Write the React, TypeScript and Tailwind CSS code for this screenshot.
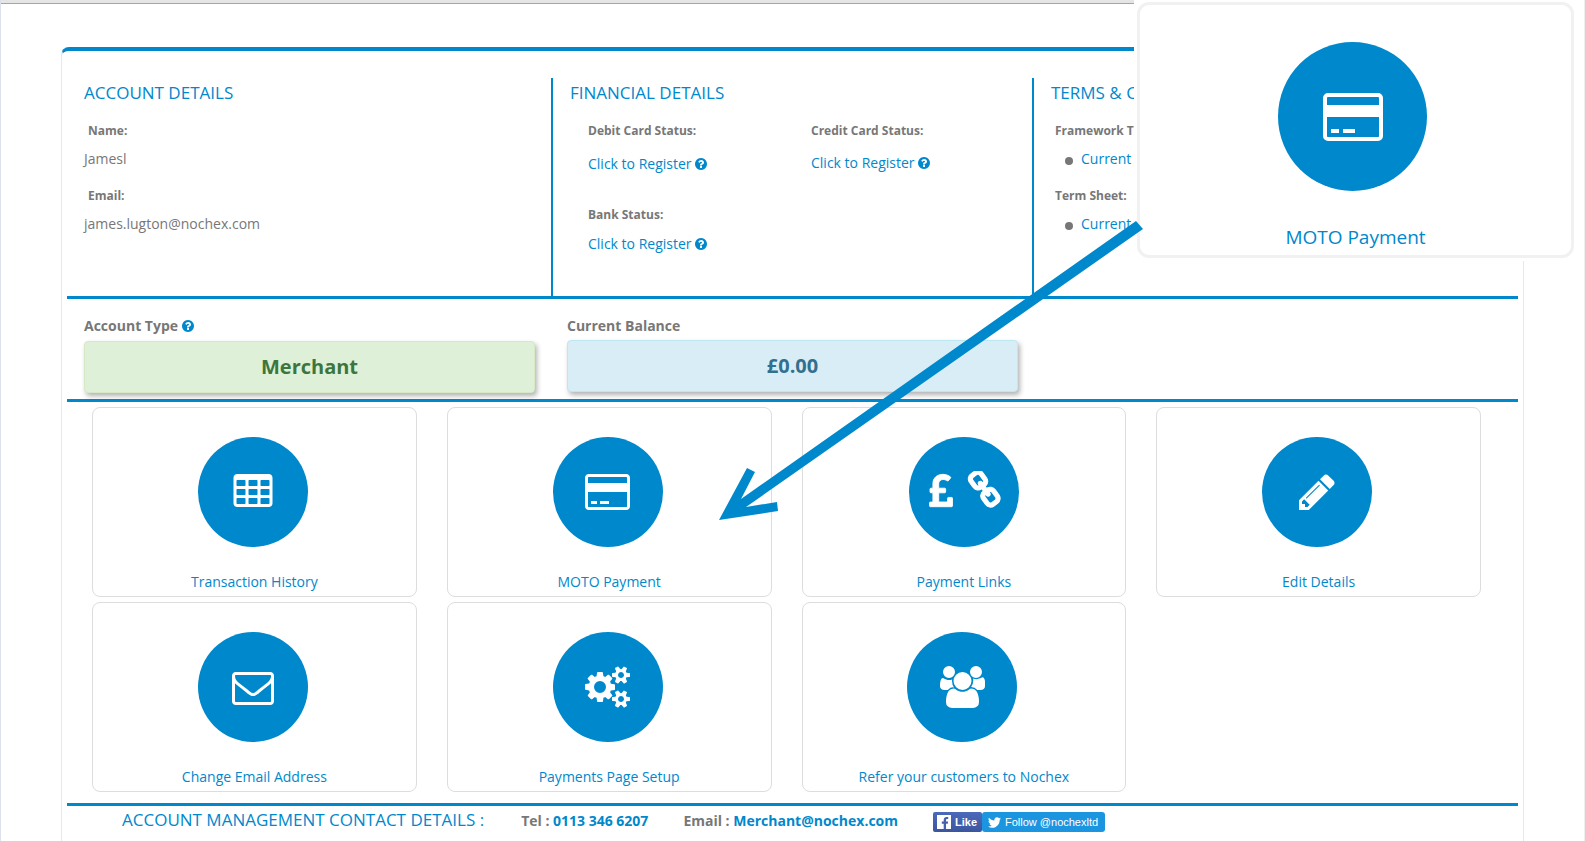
import type { ReactNode } from "react";
import { FaPoundSign, FaFacebookF, FaTwitter } from "react-icons/fa";

type GlyphProps = { d: string; box?: string; className: string };

function Glyph({ d, box = "0 0 1792 1792", className }: GlyphProps) {
  return (
    <svg viewBox={box} className={className} fill="currentColor" aria-hidden="true">
      <path d={d} />
    </svg>
  );
}

const CELL = "v-192q0-14-9-23t-23-9h-320q-14 0-23 9t-9 23v192q0 14 9 23t23 9h320q14 0 23-9t9-23z";
const TABLE =
  "M576 1376" + CELL + "m0-384" + CELL + "m512 384" + CELL + "m-512-768" + CELL + "m512 384" + CELL +
  "m512 384" + CELL + "m-512-768" + CELL + "m512 384" + CELL + "m0-384" + CELL +
  "m128-320v1088q0 66-47 113t-113 47h-1344q-66 0-113-47t-47-113v-1088q0-66 47-113t113-47h1344q66 0 113 47t47 113z";
const CARD =
  "M1760 128q66 0 113 47t47 113v1216q0 66-47 113t-113 47h-1600q-66 0-113-47t-47-113v-1216q0-66 47-113t113-47h1600zm-1600 128q-13 0-22.5 9.5t-9.5 22.5v224h1664v-224q0-13-9.5-22.5t-22.5-9.5h-1600zm1600 1280q13 0 22.5-9.5t9.5-22.5v-608h-1664v608q0 13 9.5 22.5t22.5 9.5h1600zm-1504-128v-128h256v128h-256zm384 0v-128h384v128h-384z";
const LINK =
  "M1520 1216q0-40-28-68l-208-208q-28-28-68-28-42 0-72 32 3 3 19 18.5t21.5 21.5 15 19 13 25.5 3.5 27.5q0 40-28 68t-68 28q-15 0-27.5-3.5t-25.5-13-19-15-21.5-21.5-18.5-19q-33 31-33 73 0 40 28 68l206 207q27 27 68 27 40 0 68-26l147-146q28-28 28-67zm-703-705q0-40-28-68l-206-207q-28-28-68-28-39 0-68 27l-147 146q-28 28-28 67 0 40 28 68l208 208q27 27 68 27 42 0 72-31-3-3-19-18.5t-21.5-21.5-15-19-13-25.5-3.5-27.5q0-40 28-68t68-28q15 0 27.5 3.5t25.5 13 19 15 21.5 21.5 18.5 19q33-31 33-73zm895 705q0 120-85 203l-147 146q-83 83-203 83-121 0-204-85l-206-207q-83-83-83-203 0-123 88-209l-88-88q-86 88-208 88-120 0-204-84l-208-208q-84-84-84-204t85-203l147-146q83-83 203-83 121 0 204 85l206 207q83 83 83 203 0 123-88 209l88 88q86-88 208-88 120 0 204 84l208 208q84 84 84 204z";
const PENCIL =
  "M491 1536l91-91-235-235-91 91v107h128v128h107zm523-928q0-22-22-22-10 0-17 7l-542 542q-7 7-7 17 0 22 22 22 10 0 17-7l542-542q7-7 7-17zm-54-192l416 416-832 832h-416v-416zm683 96q0 53-37 90l-166 166-416-416 166-165q36-38 90-38 53 0 91 38l235 234q37 39 37 91z";
const ENVELOPE =
  "M1664 1504v-768q-32 36-69 66-268 206-426 338-51 43-83 67t-86.5 48.5-102.5 24.5h-2q-48 0-102.5-24.5t-86.5-48.5-83-67q-158-132-426-338-37-30-69-66v768q0 13 9.5 22.5t22.5 9.5h1472q13 0 22.5-9.5t9.5-22.5zm0-1051v-24.5l-.5-13-3-12.5-5.5-9-9-7.5-14-2.5h-1472q-13 0-22.5 9.5t-9.5 22.5q0 168 147 284 193 152 401 317 6 5 35 29.5t46 37.5 44.5 31.5 50.5 27.5 43 9h2q20 0 43-9t50.5-27.5 44.5-31.5 46-37.5 35-29.5q208-165 401-317 54-43 100.5-115.5t46.5-131.5zm128-37v1088q0 66-47 113t-113 47h-1472q-66 0-113-47t-47-113v-1088q0-66 47-113t113-47h1472q66 0 113 47t47 113z";
const COGS =
  "M896 896q0-106-75-181t-181-75-181 75-75 181 75 181 181 75 181-75 75-181zm768 512q0-52-38-90t-90-38-90 38-38 90q0 53 37.5 90.5t90.5 37.5 90.5-37.5 37.5-90.5zm0-1024q0-52-38-90t-90-38-90 38-38 90q0 53 37.5 90.5t90.5 37.5 90.5-37.5 37.5-90.5zm-384 421v185q0 10-7 19.5t-16 10.5l-155 24q-11 35-32 76 34 48 90 115 7 11 7 20 0 12-7 19-23 30-82.5 89.5t-78.5 59.5q-11 0-21-7l-115-90q-37 19-77 31-11 108-23 155-7 24-30 24h-186q-11 0-20-7.5t-10-17.5l-23-153q-34-10-75-31l-118 89q-7 7-20 7-11 0-21-8-144-133-144-160 0-9 7-19 10-14 41-53t47-61q-23-44-35-82l-152-24q-10-1-17-9.5t-7-19.5v-185q0-10 7-19.5t16-10.5l155-24q11-35 32-76-34-48-90-115-7-11-7-20 0-12 7-20 22-30 82-89t79-59q11 0 21 7l115 90q34-18 77-32 11-108 23-154 7-24 30-24h186q11 0 20 7.5t10 17.5l23 153q34 10 75 31l118-89q8-7 20-7 11 0 21 8 144 133 144 160 0 8-7 19-12 16-42 54t-45 60q23 48 34 82l152 23q10 2 17 10.5t7 19.5zm640 533v140q0 16-149 31-12 27-30 52 51 113 51 138 0 4-4 7-122 71-124 71-8 0-46-47t-52-68q-20 2-30 2t-30-2q-14 21-52 68t-46 47q-2 0-124-71-4-3-4-7 0-25 51-138-18-25-30-52-149-15-149-31v-140q0-16 149-31 13-29 30-52-51-113-51-138 0-4 4-7 4-2 35-20t59-34 30-16q8 0 46 46.5t52 67.5q20-2 30-2t30 2q51-71 92-112l6-2q4 0 124 70 4 3 4 7 0 25-51 138 17 23 30 52 149 15 149 31zm0-1024v140q0 16-149 31-12 27-30 52 51 113 51 138 0 4-4 7-122 71-124 71-8 0-46-47t-52-68q-20 2-30 2t-30-2q-14 21-52 68t-46 47q-2 0-124-71-4-3-4-7 0-25 51-138-18-25-30-52-149-15-149-31v-140q0-16 149-31 13-29 30-52-51-113-51-138 0-4 4-7 4-2 35-20t59-34 30-16q8 0 46 46.5t52 67.5q20-2 30-2t30 2q51-71 92-112l6-2q4 0 124 70 4 3 4 7 0 25-51 138 17 23 30 52 149 15 149 31z";
const USERS =
  "M593 896q-162 5-265 128h-134q-82 0-138-40.5t-56-118.5q0-353 124-353 6 0 43.5 21t97.5 42.5 119 21.5q67 0 133-23-5 37-5 66 0 159 93 293zm1071 637q0 120-73 189.5t-194 69.5h-874q-121 0-194-69.5t-73-189.5q0-53 3.5-103.5t14-109 26.5-108.5 43-97.5 62-81 85.5-53.5 111.5-20q10 0 43 21.5t73 48 107 48 135 21.5 135-21.5 107-48 73-48 43-21.5q61 0 111.5 20t85.5 53.5 62 81 43 97.5 26.5 108.5 14 109 3.5 103.5zm-1024-1277q0 106-75 181t-181 75-181-75-75-181 75-181 181-75 181 75 75 181zm704 384q0 159-112.5 271.5t-271.5 112.5-271.5-112.5-112.5-271.5 112.5-271.5 271.5-112.5 271.5 112.5 112.5 271.5zm576 225q0 78-56 118.5t-138 40.5h-134q-103-123-265-128 93-134 93-293 0-29-5-66 66 23 133 23 59 0 119-21.5t97.5-42.5 43.5-21q124 0 124 353zm-128-609q0 106-75 181t-181 75-181-75-75-181 75-181 181-75 181 75 75 181z";
const QUESTION =
  "M1024 1376v-192q0-14-9-23t-23-9h-192q-14 0-23 9t-9 23v192q0 14 9 23t23 9h192q14 0 23-9t9-23zm256-672q0-88-55.5-163t-138.5-116-170-41q-243 0-371 213-15 24 8 42l132 100q7 6 19 6 16 0 25-12 53-68 86-92 34-24 86-24 48 0 85.5 26t37.5 59q0 38-20 61t-68 45q-63 28-115.5 86.5t-52.5 125.5v36q0 14 9 23t23 9h192q14 0 23-9t9-23q0-19 21.5-49.5t54.5-49.5q32-18 49-28.5t46-35 44.5-48 28-60.5 12.5-81zm384 192q0 209-103 385.5t-279.5 279.5-385.5 103-385.5-103-279.5-279.5-103-385.5 103-385.5 279.5-279.5 385.5-103 385.5 103 279.5 279.5 103 385.5z";

function Help() {
  return <Glyph d={QUESTION} box="128 128 1536 1536" className="size-3 shrink-0 text-[#0088cc]" />;
}

function SectionTitle({ children }: { children: ReactNode }) {
  return <h2 className="text-[17px] leading-6 font-normal whitespace-nowrap text-[#0088cc]">{children}</h2>;
}

function Label({ children }: { children: ReactNode }) {
  return <h3 className="text-xs leading-5 font-bold whitespace-nowrap">{children}</h3>;
}

function RegisterLink() {
  return (
    <a href="#register" className="flex items-center gap-[3px] text-sm leading-5 text-[#0088cc]">
      Click to Register
      <Help />
    </a>
  );
}

function Rule() {
  return <hr className="mx-[5px] border-0 border-t-[3px] border-[#0088cc]" />;
}

type Tile = { label: string; icon: ReactNode; centred?: boolean };

const tiles: Tile[] = [
  { label: "Transaction History", icon: <Glyph d={TABLE} className="size-[42px]" /> },
  { label: "MOTO Payment", icon: <Glyph d={CARD} box="0 0 1920 1792" className="h-[42px] w-[45px]" /> },
  {
    label: "Payment Links",
    centred: true,
    icon: (
      <span className="mb-1 flex items-center gap-3 pl-1">
        <FaPoundSign className="h-[37px] w-6" stroke="currentColor" strokeWidth={12} />
        <svg viewBox="0 0 1792 1792" className="size-[38px]" fill="currentColor" aria-hidden="true">
          <path d={LINK} transform="rotate(9 896 896)" stroke="currentColor" strokeWidth="50" />
        </svg>
      </span>
    ),
  },
  { label: "Edit Details", icon: <Glyph d={PENCIL} className="size-[42px]" /> },
  { label: "Change Email Address", icon: <Glyph d={ENVELOPE} className="size-[42px]" /> },
  { label: "Payments Page Setup", icon: <Glyph d={COGS} box="0 0 1920 1792" className="h-[42px] w-[45px]" /> },
  { label: "Refer your customers to Nochex", icon: <Glyph d={USERS} box="0 0 1920 1792" className="h-[42px] w-[45px]" /> },
];

function TileLink({ label, icon, centred }: Tile) {
  return (
    <a
      href="#tile"
      className="flex flex-col items-center rounded-lg border border-[#dddddd] pt-[29px] pb-1 text-sm leading-5 text-[#0088cc]"
    >
      <span
        className={
          "mb-[25px] flex size-[110px] items-center justify-center rounded-full bg-[#0088cc] text-white " +
          (centred ? "" : "mr-[3px]")
        }
      >
        {icon}
      </span>
      {label}
    </a>
  );
}

export default function App() {
  return (
    <div className="relative min-h-screen overflow-hidden border-x border-l-[#dde1ec] border-r-[#eeeeee] bg-white font-['Open_Sans',sans-serif] text-[#777777]">
      <div className="h-1 border-b border-[#a5a5a5] bg-[#e5e5e5]" />

      <main className="mt-[43px] mr-[60px] ml-[60px] min-h-[794px] rounded-t-lg border-x border-t-4 border-x-[#e8e8e8] border-t-[#0088cc]">
        <section className="mt-[27px] flex h-[218px] pl-[22px]">
          <div className="w-[467px] pt-[3px]">
            <SectionTitle>ACCOUNT DETAILS</SectionTitle>
            <dl className="mt-4">
              <dt className="pl-1 text-xs leading-5 font-bold">Name:</dt>
              <dd className="mt-2 text-sm leading-5">Jamesl</dd>
              <dt className="mt-[17px] pl-1 text-xs leading-5 font-bold">Email:</dt>
              <dd className="mt-2 text-sm leading-5">james.lugton@nochex.com</dd>
            </dl>
          </div>

          <div className="w-[481px] border-l-2 border-[#0088cc] pt-[3px] pl-[17px]">
            <SectionTitle>FINANCIAL DETAILS</SectionTitle>
            <div className="mt-4 grid grid-cols-[223px_1fr] pl-[18px]">
              <div>
                <Label>Debit Card Status:</Label>
                <div className="mt-[13px]">
                  <RegisterLink />
                </div>
              </div>
              <div>
                <Label>Credit Card Status:</Label>
                <div className="mt-3">
                  <RegisterLink />
                </div>
              </div>
              <div className="mt-[31px]">
                <Label>Bank Status:</Label>
                <div className="mt-[9px]">
                  <RegisterLink />
                </div>
              </div>
            </div>
          </div>

          <div className="flex-1 border-l-2 border-[#0088cc] pt-[3px] pl-[17px]">
            <SectionTitle>TERMS &amp; C</SectionTitle>
            <div className="mt-4 pl-1">
              <Label>Framework T</Label>
              <ul className="mt-2 flex items-center gap-2 pl-[10px] text-sm leading-5">
                <li className="contents">
                  <span className="mt-1 size-2 rounded-full bg-[#777777]" />
                  <a href="#framework" className="text-[#0088cc]">Current</a>
                </li>
              </ul>
            </div>
            <div className="mt-[17px] pl-1">
              <Label>Term Sheet:</Label>
              <ul className="mt-2 flex items-center gap-2 pl-[10px] text-sm leading-5">
                <li className="contents">
                  <span className="mt-1 size-2 rounded-full bg-[#777777]" />
                  <a href="#sheet" className="text-[#0088cc]">Current</a>
                </li>
              </ul>
            </div>
          </div>
        </section>

        <Rule />

        <section className="grid h-[100px] grid-cols-[451px_451px] items-start gap-8 pt-[17px] pl-[22px] text-sm leading-5 font-bold">
          <div>
            <h3 className="flex items-center gap-1">
              Account Type <Help />
            </h3>
            <p className="mt-[5px] rounded border border-[#d6e9c6] bg-[#dff0d8] py-[11px] text-center text-xl leading-7 text-[#3c763d] shadow-[2px_3px_5px_rgba(0,0,0,0.3)]">
              Merchant
            </p>
          </div>
          <div>
            <h3>Current Balance</h3>
            <p className="mt-1 rounded border border-[#bce8f1] bg-[#d9edf7] py-[11px] text-center text-xl leading-7 text-[#31708f] shadow-[2px_3px_5px_rgba(0,0,0,0.3)]">
              £0.00
            </p>
          </div>
        </section>

        <Rule />

        <nav className="grid grid-cols-4 gap-x-[30px] gap-y-[5px] pt-[5px] pr-[42px] pb-[11px] pl-[30px]">
          {tiles.map((tile) => (
            <TileLink key={tile.label} {...tile} />
          ))}
        </nav>

        <Rule />

        <footer className="flex items-start pt-[2px] pl-[60px] text-sm leading-6 font-bold whitespace-nowrap">
          <SectionTitle>ACCOUNT MANAGEMENT CONTACT DETAILS :</SectionTitle>
          <p className="ml-[37px] pt-px">
            Tel : <span className="text-[#0088cc]">0113 346 6207</span>
          </p>
          <p className="ml-[35px] pt-px">
            Email : <a href="mailto:Merchant@nochex.com" className="text-[#0088cc]">Merchant@nochex.com</a>
          </p>
          <div className="ml-[35px] flex pt-1 font-['Liberation_Sans',sans-serif] text-[11px] leading-5 text-white">
            <button type="button" className="flex h-5 w-[49px] items-center gap-1 rounded-xs bg-linear-to-b from-[#4c69ba] to-[#3b55a0] pl-1 font-bold">
              <span className="flex size-[14px] items-end justify-end bg-white">
                <FaFacebookF className="size-3 text-[#4560ad]" />
              </span>
              Like
            </button>
            <a href="#follow" className="flex h-5 w-[123px] items-center gap-1 rounded-[3px] bg-[#1b95e0] pl-[6px] font-normal">
              <FaTwitter className="size-[13px]" />
              Follow @nochexltd
            </a>
          </div>
        </footer>
      </main>

      <aside className="absolute top-0 right-0 h-[261px] w-[450px] bg-white pt-[2px] pr-[10px] pl-[3px]">
        <a
          href="#moto"
          className="flex h-[256px] flex-col items-center rounded-xl border-[3px] border-[#f1f1f1] pt-[37px] text-[19px] leading-6 text-[#0088cc]"
        >
          <span className="mr-[6px] mb-[34px] flex size-[149px] items-center justify-center rounded-full bg-[#0088cc] text-white">
            <Glyph d={CARD} box="0 0 1920 1792" className="h-[56px] w-[60px]" />
          </span>
          MOTO Payment
        </a>
      </aside>

      <svg viewBox="0 0 424 300" className="absolute top-[221px] left-[718px] h-[300px] w-[424px]" aria-hidden="true">
        <path
          d="M0 299L28 247L36 251L22 278L417 0L424 8L27 286L58 281L59 290Z"
          fill="#0088cc"
        />
      </svg>
    </div>
  );
}
